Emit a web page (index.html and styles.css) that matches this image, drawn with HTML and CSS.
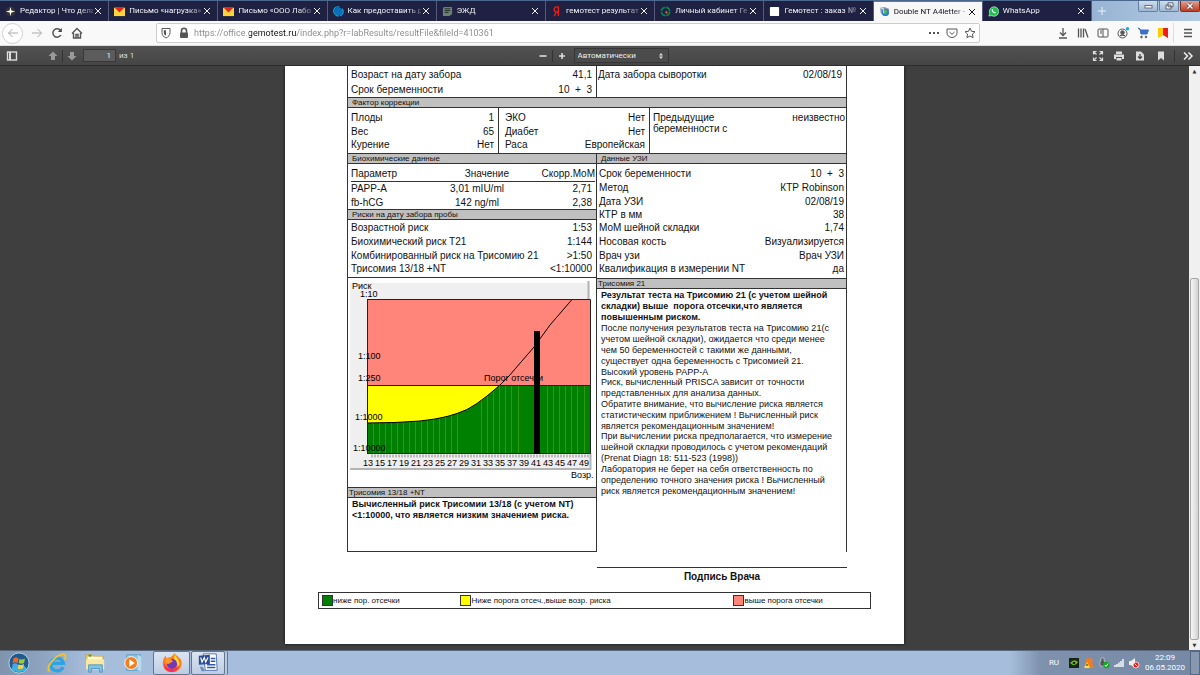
FILE: index.html
```
<!DOCTYPE html>
<html lang="ru">
<head>
<meta charset="utf-8">
<title>Double NT A4letter</title>
<link rel="stylesheet" href="styles.css">
</head>
<body>
<header class="tabbar">
  <div class="tabs">
    <div class="tab"><svg class="fav" viewBox="0 0 12 12"><circle cx="6" cy="6" r="5.5" fill="#333"/><path d="M6 1l1 4 4 1-4 1-1 4-1-4-4-1 4-1z" fill="#fff"/></svg><span class="tab-title">Редактор | Что делат</span><button class="close" aria-label="Закрыть"><svg viewBox="0 0 8 8"><path d="M1 1l6 6M7 1l-6 6"/></svg></button></div>
    <div class="tab"><svg class="fav" viewBox="0 0 12 12"><path d="M0 2h12v9H0z" fill="#ffd43b"/><path d="M0 1h12L6 7z" fill="#e52620"/></svg><span class="tab-title">Письмо «нагрузка» -</span><button class="close" aria-label="Закрыть"><svg viewBox="0 0 8 8"><path d="M1 1l6 6M7 1l-6 6"/></svg></button></div>
    <div class="tab"><svg class="fav" viewBox="0 0 12 12"><path d="M0 2h12v9H0z" fill="#ffd43b"/><path d="M0 1h12L6 7z" fill="#e52620"/></svg><span class="tab-title">Письмо «ООО Лабо</span><button class="close" aria-label="Закрыть"><svg viewBox="0 0 8 8"><path d="M1 1l6 6M7 1l-6 6"/></svg></button></div>
    <div class="tab"><svg class="fav" viewBox="0 0 12 12"><circle cx="6" cy="6" r="4.5" fill="#0870b8"/><path d="M7 1C2 0 0 4 1 7s4 4 5 4M10 3c2 3 1 6-2 8" fill="none" stroke="#19a5e0" stroke-width="1.3"/></svg><span class="tab-title">Как предоставить ра</span><button class="close" aria-label="Закрыть"><svg viewBox="0 0 8 8"><path d="M1 1l6 6M7 1l-6 6"/></svg></button></div>
    <div class="tab"><svg class="fav" viewBox="0 0 12 12"><path d="M2 1h9v8l-3 2H1V3z" fill="#6b7f72"/><path d="M3 3h6M3 5h6M3 7h4" stroke="#1c2c2a"/></svg><span class="tab-title">ЭЖД</span><button class="close" aria-label="Закрыть"><svg viewBox="0 0 8 8"><path d="M1 1l6 6M7 1l-6 6"/></svg></button></div>
    <div class="tab"><svg class="fav" viewBox="0 0 12 12"><path d="M8 11V1H6.500C4.500 1 3.500 2 3.500 3.800S4.500 6.500 6 6.500H8M6 6.500L3.500 11" fill="none" stroke="#f01b12" stroke-width="1.500"/></svg><span class="tab-title">гемотест результаты</span><button class="close" aria-label="Закрыть"><svg viewBox="0 0 8 8"><path d="M1 1l6 6M7 1l-6 6"/></svg></button></div>
    <div class="tab"><svg class="fav" viewBox="0 0 12 12"><circle cx="6" cy="6" r="4.500" fill="none" stroke="#078a55" stroke-width="1.700" stroke-dasharray="6 1"/><circle cx="7" cy="7" r="1.200" fill="#e8731c"/></svg><span class="tab-title">Личный кабинет Гем</span><button class="close" aria-label="Закрыть"><svg viewBox="0 0 8 8"><path d="M1 1l6 6M7 1l-6 6"/></svg></button></div>
    <div class="tab"><svg class="fav" viewBox="0 0 12 12"><rect x="1" y="1" width="10" height="10" rx="1" fill="#fff"/></svg><span class="tab-title">Гемотест : заказ № 5</span><button class="close" aria-label="Закрыть"><svg viewBox="0 0 8 8"><path d="M1 1l6 6M7 1l-6 6"/></svg></button></div>
    <div class="tab active"><svg class="fav" viewBox="0 0 12 12"><path d="M1 2l5-1 5 2-1 6-4 2-4-3z" fill="#8f9bb5"/><circle cx="7" cy="7" r="4" fill="#2f7fd0"/><path d="M5 5l3-1 1 3-3 2z" fill="#58b848"/><path d="M1 2l4 1v5" fill="none" stroke="#dde3ef"/></svg><span class="tab-title">Double NT A4letter -</span><button class="close" aria-label="Закрыть"><svg viewBox="0 0 8 8"><path d="M1 1l6 6M7 1l-6 6"/></svg></button></div>
    <div class="tab"><svg class="fav" viewBox="0 0 12 12"><path d="M1 11l.8-3A5.200 5.200 0 1 1 4 10.500z" fill="#1fc24c" stroke="#fff" stroke-width=".6"/><path d="M4.200 3.500c-.8 2 2 5 4 4.300l.3-1-1.200-.6-.6.5-1.400-1.500.4-.6-.5-1.100z" fill="#fff"/></svg><span class="tab-title">WhatsApp</span><button class="close" aria-label="Закрыть"><svg viewBox="0 0 8 8"><path d="M1 1l6 6M7 1l-6 6"/></svg></button></div>
  </div>
  <div class="glass">
    <button class="newtab" aria-label="Новая вкладка"><svg viewBox="0 0 10 10"><path d="M5 1v8M1 5h8"/></svg></button>
    <div class="winbtns">
      <button class="win" aria-label="Свернуть"><svg viewBox="0 0 16 8"><rect x="5" y="3.500" width="7" height="2.500" fill="#fff" stroke="#4c5668" stroke-width=".8"/></svg></button>
      <button class="win" aria-label="Развернуть"><svg viewBox="0 0 16 8"><path d="M7 .8h5v4H7zM5 3h5v4H5z" fill="#fff" stroke="#4c5668" stroke-width=".9"/></svg></button>
      <button class="win red" aria-label="Закрыть окно"><svg viewBox="0 0 16 8"><path d="M5.500 1.500l5 5M10.500 1.500l-5 5" stroke="#5d3030" stroke-width="2.800"/><path d="M5.500 1.500l5 5M10.500 1.500l-5 5" stroke="#fff" stroke-width="1.600"/></svg></button>
    </div>
  </div>
</header>

<nav class="navbar">
  <div class="navleft">
    <button class="back" aria-label="Назад"><svg class="ic dim" viewBox="0 0 12 12"><path d="M11 6H1.500M5.500 2l-4 4 4 4"/></svg></button>
    <button aria-label="Вперёд"><svg class="ic dim" viewBox="0 0 12 12"><path d="M1 6h9.500M6.500 2l4 4-4 4"/></svg></button>
    <button aria-label="Обновить"><svg class="ic" viewBox="0 0 12 12"><path d="M9.800 8A4.200 4.200 0 1 1 9.500 3.500" stroke-width="1.500"/><path d="M10.800 1v4H6.800z" fill="#444" stroke="none"/></svg></button>
    <button aria-label="Домой"><svg class="ic" viewBox="0 0 12 12"><path d="M1 6.500l5-5 5 5M2.500 6v5h7V6M5 11V7.500h2V11" stroke-width="1.400"/></svg></button>
  </div>
  <div class="urlbar">
    <svg class="ic" viewBox="0 0 12 12"><path d="M2 1.500h8v4C10 8 8.500 10 6 11 3.500 10 2 8 2 5.500z"/><path d="M6 3.200v5.500C4.500 8 3.800 7 3.800 5.500V3.200z" fill="#555" stroke="none"/></svg>
    <svg class="ic lock" viewBox="0 0 12 12"><path d="M3.500 6V3.800a2.500 2.500 0 0 1 5 0V6" stroke-width="1.600"/><rect x="2" y="5.500" width="8" height="5.500" rx="1" fill="#555" stroke="none"/></svg>
    <input class="url" aria-label="Адрес" value="https://office.gemotest.ru/index.php?r=labResults/resultFile&amp;fileId=410361">
    <div class="urlicons">
      <svg class="ic" viewBox="0 0 12 12"><path d="M1 6h2M5 6h2M9 6h2" stroke-width="2"/></svg>
      <svg class="ic" viewBox="0 0 12 12"><path d="M1 2h10v4a5 4.500 0 0 1-10 0zM3.500 5L6 7.300 8.500 5"/></svg>
      <svg class="ic" viewBox="0 0 12 12"><path d="M6 1l1.500 3.300 3.500.4-2.600 2.400.7 3.600L6 9l-3.100 1.700.7-3.600L1 4.700l3.500-.4z"/></svg>
    </div>
  </div>
  <div class="navright">
    <svg class="ic" viewBox="0 0 12 12"><path d="M6 1v7.500M3 5.500l3 3 3-3M2 11h8" stroke-width="1.300"/></svg>
    <svg class="ic" viewBox="0 0 12 12"><path d="M1.500 1.500v9M4 1.500v9M6.500 1.500v9M8 2l3 8.500" stroke-width="1.300"/></svg>
    <svg class="ic" viewBox="0 0 12 12"><rect x="1" y="2" width="10" height="8" rx="1"/><path d="M6 2v8M3 4h2M3 6h2"/></svg>
    <svg class="ic" viewBox="0 0 12 12"><circle cx="5.500" cy="6.500" r="4.500"/><circle cx="5.500" cy="5.500" r="1.800" fill="#555"/><path d="M3 9q2.500-2 5 0" stroke-width="1.500"/><circle cx="10.500" cy="1.700" r="1.700" fill="#19a9f7" stroke="none"/></svg>
    <svg class="ic" viewBox="0 0 12 12"><path d="M1 1l2 1 1 5h6l1.500-4H4z" fill="#3b6fc8" stroke="#3b6fc8"/><circle cx="4.500" cy="10" r=".8" fill="#234"/><circle cx="9" cy="10" r=".8" fill="#234"/></svg>
    <svg class="ic" viewBox="0 0 12 12"><path d="M1 1h6v7l-6 3z" fill="#fc0" stroke="none"/><path d="M6 1h5v10L6 8z" fill="#f21c12" stroke="none"/></svg>
    <span class="navsep"></span>
    <svg class="ic" viewBox="0 0 12 12"><path d="M2 2.500h8M2 6h8M2 9.500h8" stroke-width="1.300"/></svg>
  </div>
</nav>

<div class="pdfbar">
  <div class="pdfleft">
    <button aria-label="Боковая панель"><svg class="pi" viewBox="0 0 12 12"><rect x="1.500" y="2" width="9" height="8" fill="none" stroke="#ddd" stroke-width="1.400"/><path d="M3 2h2v8H3z" fill="#ddd"/></svg></button>
    <button class="up" aria-label="Предыдущая страница"><svg class="pi" viewBox="0 0 12 12"><path d="M6 1.500l4.500 4.500H8v4H4V6H1.500z" fill="#999"/></svg></button>
    <span class="psep"></span>
    <button aria-label="Следующая страница"><svg class="pi" viewBox="0 0 12 12"><path d="M6 10.500L1.500 6H4V2h4v4h2.500z" fill="#999"/></svg></button>
    <input class="pageno" id="pageno" value="1"><label for="pageno">из 1</label>
  </div>
  <div class="pdfmid">
    <button aria-label="Уменьшить"><svg class="pi" viewBox="0 0 12 12"><path d="M2.500 6h7" stroke="#ddd" stroke-width="1.600"/></svg></button>
    <span class="psep"></span>
    <button aria-label="Увеличить"><svg class="pi" viewBox="0 0 12 12"><path d="M3 6h6M6 3v6" stroke="#ddd" stroke-width="1.600"/></svg></button>
    <div class="scale"><select aria-label="Масштаб"><option>Автоматически</option></select><svg viewBox="0 0 6 8"><path d="M3 1l2 2.500H1zM3 7l2-2.500H1z" fill="#ddd"/></svg></div>
  </div>
  <div class="pdfright">
    <svg class="pi" viewBox="0 0 12 12"><path d="M1.500 4.500v-3h3M7.500 1.500h3v3M10.500 7.500v3h-3M4.500 10.500h-3v-3M2 2l2.500 2.500M10 2L7.500 4.500M10 10L7.500 7.500M2 10l2.500-2.500" fill="none" stroke="#ddd" stroke-width="1.200"/></svg>
    <svg class="pi" viewBox="0 0 12 12"><path d="M3 1.500h6V4H3zM1 4.500h10V9H9V7H3v2H1zM3.500 8h5v2.500h-5z" fill="#ddd"/></svg>
    <svg class="pi" viewBox="0 0 12 12"><path d="M2 1.500h5l3 3v6H2z" fill="#ddd"/><path d="M6 4v4M4 6.500l2 2 2-2" stroke="#444" stroke-width="1.300" fill="none"/></svg>
    <svg class="pi" viewBox="0 0 12 12"><path d="M3 1.500h6v9L6 8l-3 2.500z" fill="#ddd"/></svg>
    <span class="psep"></span>
    <svg class="pi" viewBox="0 0 12 12"><path d="M2 2.500L5.500 6 2 9.500M6.500 2.500L10 6 6.500 9.500" fill="none" stroke="#eee" stroke-width="1.500"/></svg>
  </div>
</div>

<main class="viewer">
  <div class="canvas">
    <article class="page">
      <div class="form">
        <div class="two top">
          <dl class="kv">
            <div><dt>Возраст на дату забора</dt><dd>41,1</dd></div>
            <div><dt>Срок беременности</dt><dd>10 &nbsp;+ &nbsp;3</dd></div>
          </dl>
          <dl class="kv"><div><dt>Дата забора сыворотки</dt><dd>02/08/19</dd></div></dl>
        </div>
        <h2>Фактор коррекции</h2>
        <div class="three">
          <dl class="kv"><div><dt>Плоды</dt><dd>1</dd></div><div><dt>Вес</dt><dd>65</dd></div><div><dt>Курение</dt><dd>Нет</dd></div></dl>
          <dl class="kv"><div><dt>ЭКО</dt><dd>Нет</dd></div><div><dt>Диабет</dt><dd>Нет</dd></div><div><dt>Раса</dt><dd>Европейская</dd></div></dl>
          <dl class="kv prev"><div><dt>Предыдущие<br>беременности с</dt><dd>неизвестно</dd></div></dl>
        </div>
        <div class="two main">
          <section class="col">
            <h2>Биохимические данные</h2>
            <table class="bio">
              <thead><tr><th>Параметр</th><th>Значение</th><th>Скорр.МоМ</th></tr></thead>
              <tbody><tr><td>PAPP-A</td><td>3,01 mIU/ml</td><td>2,71</td></tr><tr><td>fb-hCG</td><td>142 ng/ml</td><td>2,38</td></tr></tbody>
            </table>
            <h2>Риски на дату забора пробы</h2>
            <dl class="kv risks">
              <div><dt>Возрастной риск</dt><dd>1:53</dd></div>
              <div><dt>Биохимический риск T21</dt><dd>1:144</dd></div>
              <div><dt>Комбинированный риск на Трисомию 21</dt><dd>&gt;1:50</dd></div>
              <div><dt>Трисомия 13/18 +NT</dt><dd>&lt;1:10000</dd></div>
            </dl>
            <svg class="chart" viewBox="348 278 248 209" role="img" aria-label="Риск по возрасту">
              <rect x="350" y="283" width="240" height="186" fill="#efefef"/>
              <path d="M350 469h240.500V453M588.500 281v18" fill="none" stroke="#b4b4b4" stroke-width="2"/>
              <rect x="367" y="299" width="223" height="86" fill="#ff857a"/>
              <rect x="367" y="385" width="223" height="69" fill="#008000"/>
              <path stroke="#329a00" d="M373.500 423v30M379.500 423v30M385.500 423v30M391.500 422v31M397.500 422v31M403.500 422v31M409.500 421v32M415.500 421v32M421.500 420v33M427.500 419v34M433.500 419v34M439.500 418v35M445.500 417v36M451.500 415v38M457.500 413v40M481.500 400v53M487.500 395v58M493.500 391v62M499.500 386v67M505.500 386v67M511.500 386v67M518.500 386v67M547.500 386v67M553.500 386v67M559.500 386v67M565.500 386v67M571.500 386v67M577.500 386v67M584.500 386v67"/>
              <path d="M367 385H500L493 391 487 396 477 403.500 467 409.500 457 413.500 447 416.500 435 419 420 421 395 422.500 367 423z" fill="#ff0"/>
              <path d="M367 423L395 422.500 420 421 435 419 447 416.500 457 413.500 467 409.500 477 403.500 487 396 493 391 500 385 509 376 534 347 550 325 572 299.500" fill="none" stroke="#000"/>
              <path d="M367.500 299v155M367 299.500h223.500v86M367 385.500h223.500v68H367" fill="none" stroke="#222"/>
              <path d="M371.500 456h217" stroke="#888" stroke-width="3" stroke-dasharray="1 2"/>
              <rect x="534" y="331" width="6" height="123"/>
              <g class="axis">
                <text x="352" y="289">Риск</text><text x="360" y="297">1:10</text><text x="358" y="359">1:100</text><text x="358" y="381">1:250</text><text x="355" y="420">1:1000</text><text x="353" y="451">1:10000</text>
                <text x="484" y="381">Порог отсечки</text><text x="571" y="478">Возр.</text>
                <g text-anchor="middle"><text x="368" y="466">13</text><text x="380" y="466">15</text><text x="392" y="466">17</text><text x="404" y="466">19</text><text x="416" y="466">21</text><text x="428" y="466">23</text><text x="440" y="466">25</text><text x="452" y="466">27</text><text x="464" y="466">29</text><text x="476" y="466">31</text><text x="488" y="466">33</text><text x="500" y="466">35</text><text x="512" y="466">37</text><text x="524" y="466">39</text><text x="536" y="466">41</text><text x="548" y="466">43</text><text x="560" y="466">45</text><text x="572" y="466">47</text><text x="584" y="466">49</text></g>
              </g>
            </svg>
            <h2 class="tight">Трисомия 13/18 +NT</h2>
            <p class="verdict">Вычисленный риск Трисомии 13/18 (с учетом NT)<br>&lt;1:10000, что является низким значением риска.</p>
          </section>
          <section class="col">
            <h2>Данные УЗИ</h2>
            <dl class="kv uzi">
              <div><dt>Срок беременности</dt><dd>10 &nbsp;+ &nbsp;3</dd></div>
              <div><dt>Метод</dt><dd>КТР Robinson</dd></div>
              <div><dt>Дата УЗИ</dt><dd>02/08/19</dd></div>
              <div><dt>КТР в мм</dt><dd>38</dd></div>
              <div><dt>МоМ шейной складки</dt><dd>1,74</dd></div>
              <div><dt>Носовая кость</dt><dd>Визуализируется</dd></div>
              <div><dt>Врач узи</dt><dd>Врач УЗИ</dd></div>
              <div><dt>Квалификация в измерении NT</dt><dd>да</dd></div>
            </dl>
            <h2 class="tight">Трисомия 21</h2>
            <div class="notes">
              <strong>Результат теста на Трисомию 21 (с учетом шейной<br>складки) выше &nbsp;порога отсечки,что является<br>повышенным риском.</strong>
              <p>После получения результатов теста на Трисомию 21(с<br>учетом шейной складки), ожидается что среди менее<br>чем 50 беременностей с такими же данными,<br>существует одна беременность с Трисомией 21.</p>
              <p>Высокий уровень PAPP-A</p>
              <p>Риск, вычисленный PRISCA зависит от точности<br>представленных для анализа данных.</p>
              <p>Обратите внимание, что вычисление риска является<br>статистическим приближением ! Вычисленный риск<br>является рекомендационным значением!</p>
              <p>При вычислении риска предполагается, что измерение<br>шейной складки проводилось с учетом рекомендаций<br>(Prenat Diagn 18: 511-523 (1998))</p>
              <p>Лаборатория не берет на себя ответственность по<br>определению точного значения риска ! Вычисленный<br>риск является рекомендационным значением!</p>
            </div>
          </section>
        </div>
        <div class="sign">Подпись Врача</div>
      </div>
      <ul class="legend">
        <li><i class="sw green"></i>ниже пор. отсечки</li>
        <li><i class="sw yellow"></i>Ниже порога отсеч.,выше возр. риска</li>
        <li><i class="sw rose"></i>выше порога отсечки</li>
      </ul>
    </article>
  </div>
  <div class="scroll"><span>▲</span><div class="thumb"></div><span>▼</span></div>
</main>

<footer class="taskbar">
  <button class="task" aria-label="Пуск"><svg viewBox="0 0 24 24"><circle cx="12" cy="12" r="11" fill="#1f5c8d" stroke="#b9d8ea"/><ellipse cx="12" cy="18" rx="8" ry="4" fill="#37b5dc"/><path d="M6 7q3-2 5.500 0l-.8 5Q8 10.500 5 12z" fill="#f0672c"/><path d="M12.500 7.500q3 1.500 6-.5l-1 5q-3 1.500-5.800 0z" fill="#9ccc3c"/><path d="M5 13q3-1.500 5.500 0l-.8 5Q7 16.500 4.500 17.500z" fill="#4ba5ea"/><path d="M11.500 13.500q3 1.500 6-.5l-1 4.500q-3 2-5.800.5z" fill="#ffd041"/></svg></button>
  <button class="task" aria-label="Internet Explorer"><svg viewBox="0 0 24 24"><path d="M18.500 16.500A7 7 0 1 1 19 12.500H6" fill="none" stroke="#2ba4e4" stroke-width="3.600"/><path d="M4 21C-1 19 8 4 18 2.500c4-.5 4 3 2 6" fill="none" stroke="#f5c32c" stroke-width="2"/></svg></button>
  <button class="task" aria-label="Проводник"><svg viewBox="0 0 24 24"><path d="M2 3h7l2 2h10v13H2z" fill="#e9cd72" stroke="#c7a13e"/><path d="M4 5h16v4H4z" fill="#fff8cf"/><path d="M5 4h3" stroke="#3a9b48" stroke-width="2"/><path d="M2 8h20v11H2z" fill="#f9e9a0"/><path d="M5 22v-8h15v8h-3v-4H8v4z" fill="#7cc4e8" stroke="#5797bd"/></svg></button>
  <button class="task" aria-label="Проигрыватель"><svg viewBox="0 0 24 24"><path d="M5 3h15v17H5z" fill="#8cc3e0" stroke="#5c9fc6"/><path d="M17 3l4 2v16l-4-1z" fill="#b5dcf0"/><circle cx="10" cy="12" r="7" fill="#f57e20" stroke="#fff"/><path d="M8 8l6 4-6 4z" fill="#fff"/></svg></button>
  <button class="task open" aria-label="Firefox"><svg viewBox="0 0 24 24"><path d="M12 22C5 22 1.500 17 2 11c.2-3 2-6 3-7l1 3c1-1 3-1 4-1 2-1 3-3 5-5 1 3 5 4 7 8 2 7-2 13-10 13z" fill="#ff7a20"/><path d="M15 1c0 4 6 7 5 13l-2 3c1-4-2-7-4-9z" fill="#ffd62e"/><circle cx="12" cy="13" r="5.500" fill="#7437b5"/><path d="M3 12c4 8 12 8 17 3-2 8-12 9-16 3z" fill="#f7315b"/><path d="M5 7c4-1 7 1 8 4-3 0-3 2-5 2S4 10 5 7z" fill="#ff9b22"/></svg></button>
  <button class="task open word" aria-label="Word"><svg viewBox="0 0 24 24"><path d="M7 2h14l1 18H9z" fill="#fff" stroke="#506cab"/><path d="M15 7h5M15 10h5M11 14h9M11 17h9" stroke="#3058a4" stroke-width="1.600"/><path d="M2 4l12-1v10L2 14z" fill="#294b9a"/><path d="M4 6l1.500 5L8 6l1.500 5L12 6" fill="none" stroke="#fff" stroke-width="1.300"/><path d="M3 16h3l3 5H5z" fill="#6e8ac3"/></svg></button>
  <div class="tray">
    <span class="lang">RU</span>
    <svg viewBox="0 0 12 12"><rect x="1" y="1" width="10" height="10" fill="#15251c"/><path d="M2 6q4-5 8-1-3 6-8 1z" fill="#76b900"/><circle cx="6" cy="6" r="1.300" fill="#15251c"/></svg>
    <svg viewBox="0 0 12 12"><path d="M3 2l3-1 4 1-1 4 2 5H1l2-4z" fill="#f57b1b"/><path d="M4 5l3 6H1z" fill="#ffe043"/><path d="M4 7v2" stroke="#222"/></svg>
    <svg viewBox="0 0 12 12"><path d="M3 1h3v3h1v5H2V4h1z" fill="#555" stroke="#ddd" stroke-width=".6"/><circle cx="8.500" cy="8" r="3.300" fill="#17a52c"/><path d="M6.800 8l1.300 1.400 2-2.800" fill="none" stroke="#fff"/></svg>
    <svg viewBox="0 0 12 12"><path d="M2 8v2M4 7v3M6 5.500V10M8 4v6M10 2v8" stroke="#fff" stroke-width="1.400"/></svg>
    <svg viewBox="0 0 12 12"><path d="M1 4h2l4-3v10L3 8H1z" fill="#eee"/><circle cx="8" cy="8" r="3" fill="#e22" stroke="#fff" stroke-width=".7"/><path d="M6.500 6.500l3 3" stroke="#fff"/></svg>
    <time class="clock">22:09<br>06.05.2020</time>
    <span class="peek"></span>
  </div>
</footer>
</body>
</html>
```
FILE: styles.css
```
* { box-sizing: border-box; }
body { margin: 0; height: 100vh; display: flex; flex-direction: column; overflow: hidden; font: 8px/12px Roboto, "Noto Sans", sans-serif; color: #111; }
button { border: 0; padding: 0; background: none; display: flex; align-items: center; justify-content: center; color: inherit; font: inherit; }
input, select { font: inherit; }
h2, p, dl, dd, ul { margin: 0; padding: 0; }
svg { flex: none; }

.tabbar { display: flex; height: 21px; flex: none; background: #1f2142; border-top: 1px solid #4b678d; }
.tabs { display: flex; flex: 0 0 91%; min-width: 0; }
.tab { flex: 1 1 0; min-width: 0; display: flex; align-items: center; gap: 4px; padding: 0 6px 0 5px; border-right: 1px solid #565a7c; color: #f2f2f7; }
.fav { width: 11px; height: 11px; }
.tab-title { flex: 1; min-width: 0; margin-right: -3px; white-space: nowrap; mask-image: linear-gradient(90deg, #000 80%, rgba(0, 0, 0, .3)); }
.close svg { width: 8px; height: 8px; stroke: currentColor; fill: none; }
.tab.active { background: #f7f7f8; color: #15151a; border-top: 1px solid #2389e8; }
.glass { flex: 1; display: flex; justify-content: space-between; padding: 0 0 0 5px; background: linear-gradient(90deg, #98b4d4, #b3cae4); }
.newtab svg { width: 10px; height: 10px; stroke: #e9f2fb; fill: none; }
.winbtns { display: flex; height: 11px; gap: 1px; }
.win { width: 20px; border: 1px solid #667f9f; border-top: 0; border-radius: 0 0 2px 2px; background: linear-gradient(#d0ddec, #9eb7d3); }
.win svg { width: 16px; height: 8px; }
.win.red { background: linear-gradient(#e3a193, #bd3d24); border-color: #76342c; }

.navbar { display: flex; align-items: center; height: 25px; flex: none; background: #f9f9fa; border-bottom: 1px solid #ddd; padding: 0 6px 0 2px; }
.navleft { display: flex; gap: 8px; flex: 1 0 154px; align-items: center; }
.ic { width: 12px; height: 12px; fill: none; stroke: #555; stroke-width: 1; }
.ic.dim { stroke: #aaa; }
.back { width: 21px; height: 21px; border: 1px solid #d0d0d0; border-radius: 50%; background: #fff; }
.urlbar { flex: 0 1 824px; min-width: 0; height: 20px; display: flex; align-items: center; gap: 4px; padding: 0 3px; border: 1px solid #ccc; border-radius: 2px; background: #fff; }
.lock { margin-left: 2px; }
.url { flex: 1; min-width: 0; border: 0; padding: 0; outline: 0; font-size: 9px; color: transparent; background: linear-gradient(90deg, #888 55px, #111 55px 103px, #888 103px); background-clip: text; -webkit-background-clip: text; }
.urlicons { display: flex; gap: 6px; }
.navright { display: flex; align-items: center; justify-content: flex-end; gap: 8px; flex: 1 0 214px; }
.navsep { width: 1px; height: 20px; background: #ddd; margin-left: -4px; }

.pdfbar { display: grid; grid-template-columns: 1fr auto 1fr; align-items: center; height: 20px; flex: none; padding: 0 6px; background: linear-gradient(#525252, #454545); border-bottom: 1px solid #2c2c2c; color: #ddd; }
.pdfleft, .pdfmid, .pdfright { display: flex; align-items: center; }
.pdfmid { padding-left: 5px; }
.pi { width: 12px; height: 12px; }
.up { margin-left: 29px; }
.psep { width: 1px; height: 12px; background: #333; margin: 0 3px; }
.pageno { width: 33px; height: 13px; margin: 0 3px 0 5px; padding: 0 4px; border: 1px solid #383838; background: #5c5c5c; color: #eee; text-align: right; }
.scale { display: flex; align-items: center; width: 95px; height: 15px; margin-left: 6px; padding-right: 4px; border: 1px solid #373737; background: #4b4b4b; }
.scale select { flex: 1; appearance: none; border: 0; padding: 0 3px; background: none; color: #eee; }
.scale svg { width: 6px; height: 8px; }
.pdfright { justify-content: flex-end; gap: 9px; }
.pdfright .psep { margin: 0 -2px; }

.viewer { flex: 1; min-height: 0; display: flex; background: #3f3f3f; }
.canvas { flex: 1; min-width: 0; overflow: hidden; display: flex; justify-content: center; align-items: flex-start; }
.page { width: 100%; max-width: 619px; background: #fff; padding: 0 33px 35px; font: 10px/14px "Liberation Sans", Arial, sans-serif; box-shadow: 0 0 3px #111; }
.scroll { width: 11px; display: flex; flex-direction: column; align-items: center; background: #f0f0f0; }
.scroll span { font: 5px/10px "DejaVu Sans", sans-serif; color: #333; }
.thumb { margin: 202px 1px 0; flex: 1; align-self: stretch; border: 1px solid #a6a6a6; border-radius: 2px; background: linear-gradient(90deg, #f6f6f6, #d2d2d2); }

.form { margin: 0 24px 0 29px; }
.two { display: grid; grid-template-columns: 249fr 250fr; }
.three { display: grid; grid-template-columns: 151fr 151fr 197fr; border-right: 1px solid #333; }
.kv > div { display: flex; justify-content: space-between; white-space: nowrap; height: 14px; }
.kv { padding: 3px 4px 1px 3px; border-left: 1px solid #333; }
.top { border-right: 1px solid #333; }
.top .kv { padding: 1px 4px 0 3px; }
.top .kv + .kv { padding-left: 1px; }
.top .kv > div { height: 15px; line-height: 15px; }
.three .kv > div:nth-child(2) { height: 13px; line-height: 13px; }
.three .kv + .kv { padding-left: 6px; }
.three .kv.prev { padding-left: 3px; padding-right: 1px; }
.prev dt { line-height: 11px; padding-top: 1px; }
h2 { height: 11px; padding: 0 4px; overflow: hidden; white-space: nowrap; font-size: 8px; line-height: 9px; font-weight: 400; background: #c0c0c0; border: 1px solid #333; }
h2.tight { padding: 0 1px; }
.main { border-right: 1px solid #333; }
.col { min-width: 0; }
.col:first-child { border-bottom: 1px solid #333; display: flex; flex-direction: column; border-left: 1px solid #333; }
.col + .col { border-left: 1px solid #333; }
.col h2 { border-left: 0; border-right: 0; }
.col .kv { border-left: 0; }
.bio { width: auto; margin: 3px 1px 0 3px; border-collapse: collapse; table-layout: fixed; }
.bio th, .bio td { height: 14px; padding: 0; line-height: 13px; font-weight: 400; text-align: right; white-space: nowrap; }
.bio th { border-bottom: 1px solid #333; }
.bio td { padding-right: 3px; }
.bio th:nth-child(1), .bio td:nth-child(1) { text-align: left; width: 94px; }
.bio th:nth-child(2) { width: 64px; }
.bio td:nth-child(2) { text-align: center; padding: 0; }
.risks { padding-top: 1px; padding-bottom: 1px; border-bottom: 1px solid #333; }
.risks > div:nth-child(3), .uzi > div:nth-child(3), .uzi > div:nth-child(4), .uzi > div:nth-child(7) { height: 13px; line-height: 13px; }
.uzi { padding: 3px 2px 2px; }
.chart { display: block; width: 100%; height: auto; }
.axis { font-size: 9px; }
.verdict { flex: 1; min-height: 53px; padding: 1px 4px; font-weight: 700; font-size: 9px; line-height: 11px; white-space: nowrap; }
.notes { padding: 1px 4px 0; font-size: 9px; line-height: 11px; white-space: nowrap; }
.notes strong { display: block; }
.notes p + p { margin-top: -1px; }
.notes p:nth-of-type(even) { margin-top: 0; }
.sign { width: 50%; margin: 15px 0 0 auto; padding-top: 2px; border-top: 1px solid #333; text-align: center; font-weight: 700; }
.legend { display: grid; grid-template-columns: 139fr 274fr 137fr; align-items: center; margin-top: 8px; height: 17px; border: 1px solid #333; padding-left: 3px; list-style: none; font-size: 8px; white-space: nowrap; }
.legend li { display: flex; align-items: center; }
.sw { width: 11px; height: 11px; border: 1px solid #333; }
.green { background: #008000; }
.yellow { background: #ff0; }
.rose { background: #ff857a; }

.taskbar { display: flex; height: 25px; flex: none; align-items: stretch; background: linear-gradient(90deg, #7f93ae, #8ca2bf 40px, #a6bedc 90px, #a6bedc 1010px, #7e92ad 1040px, #7589a6); border-top: 1px solid #59697f; }
.task { width: 38px; }
.task svg { width: 22px; height: 22px; }
.task.open { width: 37px; margin-left: 1px; border: 1px solid #63758f; border-radius: 2px; background: linear-gradient(#dbe5f1, #bccde2); }
.task.word { width: 34px; box-shadow: 2px 0 0 #b9cade, 3px 0 0 #63758f; }
.tray { margin-left: auto; display: flex; align-items: center; gap: 3px; color: #fff; }
.tray svg { width: 12px; height: 12px; }
.lang { margin-right: 6px; }
.clock { width: 44px; text-align: center; line-height: 10px; }
.peek { width: 10px; align-self: stretch; border: 1px solid #56687f; background: #8799b1; }
```
